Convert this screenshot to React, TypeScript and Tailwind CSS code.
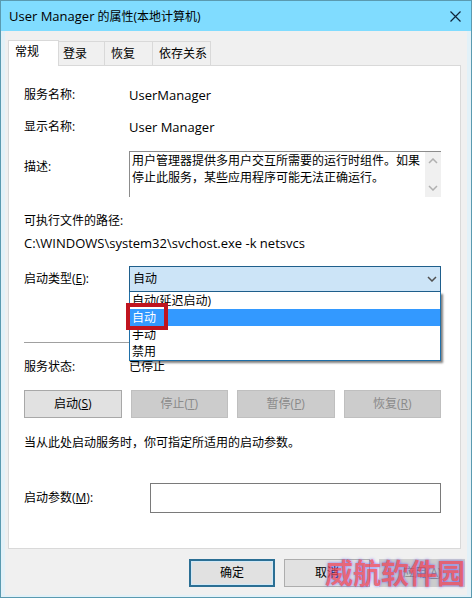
import { useState, type ReactNode } from "react"

type RowProps = {
    label: ReactNode
    htmlFor?: string
    className: string
    children: ReactNode
}

type ActionButtonProps = {
    text: string
    hotkey: string
    disabled?: boolean
}

const tabs = [
    { label: "登录", style: "w-[46px] pl-1" },
    { label: "恢复", style: "w-12 pl-1.5" },
    { label: "依存关系", style: "w-[58px] pl-1.5" },
]

const startTypes = [
    { label: "自动(延迟启动)", value: "delayed" },
    { label: "自动", value: "auto" },
    { label: "手动", value: "manual" },
    { label: "禁用", value: "disabled" },
]

const actions = [
    { text: "启动", hotkey: "S", disabled: false },
    { text: "停止", hotkey: "T", disabled: true },
    { text: "暂停", hotkey: "P", disabled: true },
    { text: "恢复", hotkey: "R", disabled: true },
]

function Chevron({ up, className }: { up?: boolean; className: string }) {
    return (
        <svg viewBox="0 0 10 6" className={`h-1.5 w-2.5 fill-none stroke-current ${className}`} aria-hidden="true">
            <path d={up ? "M1 5L5 1L9 5" : "M1 1L5 5L9 1"} strokeWidth="1.5" />
        </svg>
    )
}

function Row({ label, htmlFor, className, children }: RowProps) {
    return (
        <div className={`flex ${className}`}>
            <div className="w-[105px] shrink-0">
                {htmlFor ? <label htmlFor={htmlFor}>{label}</label> : label}
            </div>
            {children}
        </div>
    )
}

function ActionButton({ text, hotkey, disabled }: ActionButtonProps) {
    return (
        <button
            type="button"
            disabled={disabled}
            className="h-7 flex-1 border border-[#a8a8a8] bg-[#e1e1e1] disabled:border-[#bfbfbf] disabled:bg-[#cccccc] disabled:text-[#8a8a8a]"
        >
            {text}(<u>{hotkey}</u>)
        </button>
    )
}

export default function App() {
    const [startType, setStartType] = useState("auto")
    const [args, setArgs] = useState("")

    return (
        <div className="flex min-h-screen flex-col border border-[#5a9ab0] bg-[#f0f0f0] font-['Open_Sans','Noto_Sans_CJK_SC',sans-serif] text-xs leading-4 text-black">
            <header className="flex h-[30px] items-center justify-between bg-[#80dcff] pr-2.5 pl-2">
                <h1><span className="text-[13px]">User Manager</span> 的属性(本地计算机)</h1>
                <button type="button" aria-label="关闭">
                    <svg viewBox="0 0 11 11" className="size-[11px] stroke-[#10253a]">
                        <path d="M0.5 0.5L10.5 10.5M10.5 0.5L0.5 10.5" strokeWidth="1.2" />
                    </svg>
                </button>
            </header>

            <div className="flex grow flex-col border-x-4 border-b-2 border-[#e2f1f8] pt-[9px] pr-1.5 pl-[3px]">
                <div role="tablist" className="flex items-end">
                    <button role="tab" aria-selected="true" type="button" className="z-10 -mb-px h-[26px] w-[51px] border border-b-0 border-[#d9d9d9] bg-white pb-1 pl-1.5 text-left">
                        常规
                    </button>
                    {tabs.map((tab) => (
                        <button
                            key={tab.label}
                            role="tab"
                            aria-selected="false"
                            type="button"
                            className={`h-6 border border-b-0 border-l-0 border-[#d9d9d9] bg-[#f0f0f0] text-left whitespace-nowrap ${tab.style}`}
                        >
                            {tab.label}
                        </button>
                    ))}
                </div>

                <main className="flex flex-col border border-[#d9d9d9] bg-white pt-[21px] pr-[19px] pb-[35px] pl-[15px]">
                    <Row label="服务名称:" className="h-8">
                        <span className="text-[13px]">UserManager</span>
                    </Row>
                    <Row label="显示名称:" className="h-8">
                        <span className="text-[13px]">User Manager</span>
                    </Row>
                    <Row label={<span className="block pt-2">描述:</span>} htmlFor="description" className="items-start">
                        <div className="flex h-[46px] grow border-t border-l border-[#8c8c8c]">
                            <textarea
                                id="description"
                                readOnly
                                className="grow resize-none overflow-hidden pl-0.5 leading-[17px] outline-none"
                                value="用户管理器提供多用户交互所需要的运行时组件。如果停止此服务，某些应用程序可能无法正确运行。"
                            />
                            <div className="flex w-4 flex-col items-center justify-between bg-[#f0f0f0] py-1.5 text-[#b0b0b0]">
                                <Chevron up className="" />
                                <Chevron className="" />
                            </div>
                        </div>
                    </Row>

                    <p className="mt-4">可执行文件的路径:</p>
                    <p className="mt-1.5 text-[13px]">C:\WINDOWS\system32\svchost.exe -k netsvcs</p>

                    <Row label={<>启动类型(<u>E</u>):</>} htmlFor="start-type" className="mt-[15px] items-center">
                        <div className="relative grow">
                            <select
                                id="start-type"
                                value={startType}
                                onChange={(e) => setStartType(e.target.value)}
                                className="block h-[26px] w-full appearance-none border border-[#1f5f8c] bg-[#cce4f7] pl-[3px] outline-none"
                            >
                                {startTypes.map((type) => (
                                    <option key={type.value} value={type.value}>{type.label}</option>
                                ))}
                            </select>
                            <Chevron className="pointer-events-none absolute top-2.5 right-1 text-[#505050]" />
                            <ul
                                role="listbox"
                                aria-label="启动类型"
                                className="absolute inset-x-0 top-full z-10 border border-t-0 border-[#1f6fa8] bg-white shadow-[2px_2px_2px_#00000080]"
                            >
                                {startTypes.map((type) => (
                                    <li
                                        key={type.value}
                                        role="option"
                                        aria-selected={type.value === startType}
                                        onClick={() => setStartType(type.value)}
                                        className="relative h-[17px] pl-0.5 leading-[17px] aria-selected:bg-[#3399ff] aria-selected:text-white"
                                    >
                                        {type.label}
                                        {type.value === "auto" && (
                                            <span className="pointer-events-none absolute -top-1.5 -left-1 z-10 h-[27px] w-[42px] border-4 border-[#c0141f]" />
                                        )}
                                    </li>
                                ))}
                            </ul>
                        </div>
                    </Row>

                    <hr className="mt-[50px] border-[#a0a0a0]" />

                    <Row label="服务状态:" className="mt-4">
                        <span>已停止</span>
                    </Row>

                    <div className="mt-[15px] flex gap-[9px]">
                        {actions.map((action) => (
                            <ActionButton key={action.text} {...action} />
                        ))}
                    </div>

                    <p className="mt-[17px]">当从此处启动服务时，你可指定所适用的启动参数。</p>

                    <div className="mt-8 flex items-center">
                        <label htmlFor="start-args" className="w-[126px] shrink-0">启动参数(<u>M</u>):</label>
                        <input
                            id="start-args"
                            type="text"
                            value={args}
                            onChange={(e) => setArgs(e.target.value)}
                            className="h-[30px] min-w-0 grow border border-[#7a7a7a] bg-white px-1 outline-none"
                        />
                    </div>
                </main>

                <footer className="relative -mr-1 flex justify-end gap-[9px] pt-2.5 pb-2">
                    <button type="button" className="h-7 w-[86px] border-2 border-[#2b6f94] bg-[#e1e1e1] ring-1 ring-[#cfe8f7] ring-inset">确定</button>
                    <button type="button" className="h-7 w-[86px] border border-[#adadad] bg-[#e1e1e1]">取消</button>
                    <button type="button" disabled className="h-7 w-[86px] bg-[#cccccc] text-[#8a8a8a]">应用(<u>A</u>)</button>
                    <span className="pointer-events-none absolute right-0 bottom-2 text-[28px] leading-7 font-bold whitespace-nowrap text-[#e84058] opacity-75 [text-shadow:0_0_3px_#5050ff]">
                        威航软件园
                    </span>
                </footer>
            </div>
        </div>
    )
}
